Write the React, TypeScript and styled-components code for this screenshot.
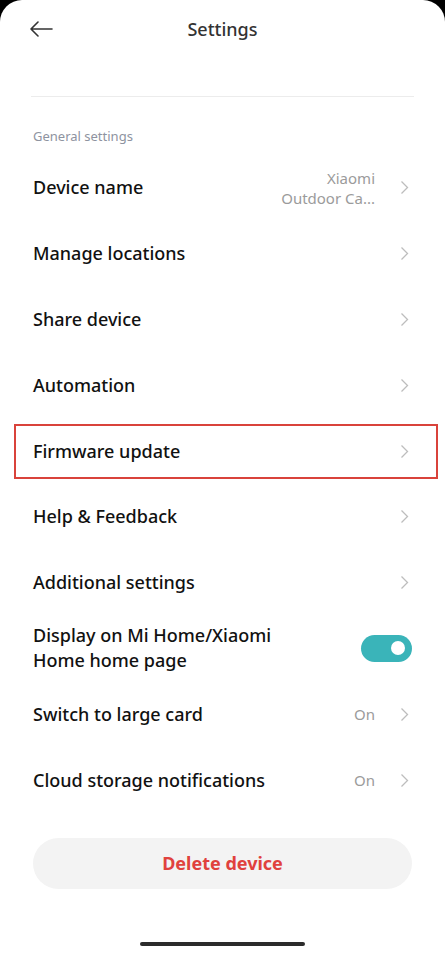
import styled, { createGlobalStyle } from "styled-components";

const GlobalStyle = createGlobalStyle`
  html, body {
    margin: 0;
    padding: 0;
    background: #000;
  }
  body {
    font-family: "Noto Sans", "Open Sans", sans-serif;
    -webkit-font-smoothing: antialiased;
  }
`;

interface Item {
  label: string;
  value?: string[];
  toggle?: boolean;
  highlighted?: boolean;
}

const items: Item[] = [
  { label: "Device name", value: ["Xiaomi", "Outdoor Ca..."] },
  { label: "Manage locations" },
  { label: "Share device" },
  { label: "Automation" },
  { label: "Firmware update", highlighted: true },
  { label: "Help & Feedback" },
  { label: "Additional settings" },
  { label: "Display on Mi Home/Xiaomi Home home page", toggle: true },
  { label: "Switch to large card", value: ["On"] },
  { label: "Cloud storage notifications", value: ["On"] },
];

const Chevron = () => (
  <ChevronIcon width="9" height="15" viewBox="0 0 9 15">
    <polyline points="1.5,1.5 7.5,7.5 1.5,13.5" fill="none" stroke="#bdbdbd" strokeWidth="1.3" />
  </ChevronIcon>
);

const App = () => {
  return (
    <>
      <GlobalStyle />
      <Screen>
        <Header>
          <BackButton aria-label="Back">
            <svg width="23" height="16" viewBox="0 0 23 16">
              <path d="M1 8 H22 M8 1 L1 8 L8 15" fill="none" stroke="#333" strokeWidth="1.6" strokeLinecap="round" strokeLinejoin="round" />
            </svg>
          </BackButton>
          <Title>Settings</Title>
        </Header>
        <Divider />
        <SectionLabel>General settings</SectionLabel>
        <List>
          {items.map((item) => (
            <Row key={item.label} highlighted={item.highlighted}>
              <RowLabel multiline={item.toggle}>{item.label}</RowLabel>
              {item.toggle ? (
                <Toggle>
                  <Knob />
                </Toggle>
              ) : (
                <RowRight>
                  {item.value && (
                    <Value>
                      {item.value.map((line) => (
                        <span key={line}>{line}</span>
                      ))}
                    </Value>
                  )}
                  <Chevron />
                </RowRight>
              )}
            </Row>
          ))}
        </List>
        <DeleteButton>Delete device</DeleteButton>
        <HomeBar />
      </Screen>
    </>
  );
};

const Screen = styled.div`
  background: #fff;
  min-height: 954px;
  border-radius: 22px 22px 0 0;
  padding: 0 33px;
  box-sizing: border-box;
  display: flex;
  flex-direction: column;
`;

const Header = styled.div`
  height: 58px;
  display: flex;
  align-items: center;
  justify-content: center;
  position: relative;
`;

const BackButton = styled.button`
  position: absolute;
  left: -3px;
  top: 21px;
  border: none;
  background: none;
  padding: 0;
  display: flex;
`;

const Title = styled.h1`
  margin: 0;
  font-size: 18px;
  font-weight: 500;
  color: #333;
`;

const Divider = styled.div`
  height: 1px;
  background: #ececec;
  margin: 38px -2px 0;
`;

const SectionLabel = styled.div`
  margin-top: 30px;
  font-size: 13px;
  line-height: 18px;
  color: #8e93a0;
`;

const List = styled.div`
  margin-top: 10px;
  display: flex;
  flex-direction: column;
`;

const Row = styled.div<{ highlighted?: boolean }>`
  height: 65.8px;
  display: flex;
  align-items: center;
  justify-content: space-between;
  position: relative;

  &::after {
    content: "";
    display: ${({ highlighted }) => (highlighted ? "block" : "none")};
    position: absolute;
    left: -19px;
    right: -26px;
    top: 6px;
    bottom: 5px;
    border: 2px solid #d9433b;
  }
`;

const RowLabel = styled.div<{ multiline?: boolean }>`
  font-size: 18px;
  font-weight: 500;
  color: #111;
  line-height: 25px;
  max-width: ${({ multiline }) => (multiline ? "260px" : "none")};
`;

const RowRight = styled.div`
  display: flex;
  align-items: center;
  gap: 25px;
  margin-right: 3px;
`;

const Value = styled.div`
  display: flex;
  flex-direction: column;
  align-items: flex-end;
  font-size: 15px;
  line-height: 20px;
  color: #9b9b9b;
`;

const ChevronIcon = styled.svg`
  display: block;
`;

const Toggle = styled.div`
  width: 51px;
  height: 27px;
  border-radius: 14px;
  background: #3ab4b9;
  display: flex;
  align-items: center;
  justify-content: flex-end;
  padding-right: 7px;
  box-sizing: border-box;
`;

const Knob = styled.div`
  width: 14px;
  height: 14px;
  border-radius: 50%;
  background: #fff;
`;

const DeleteButton = styled.button`
  margin-top: 25px;
  height: 51px;
  border: none;
  border-radius: 26px;
  background: #f3f3f3;
  color: #e0413d;
  font-family: inherit;
  font-size: 18px;
  font-weight: 700;
`;

const HomeBar = styled.div`
  width: 165px;
  height: 4px;
  border-radius: 2px;
  background: #2b2b2b;
  margin: 53px auto 0;
`;

export default App;
